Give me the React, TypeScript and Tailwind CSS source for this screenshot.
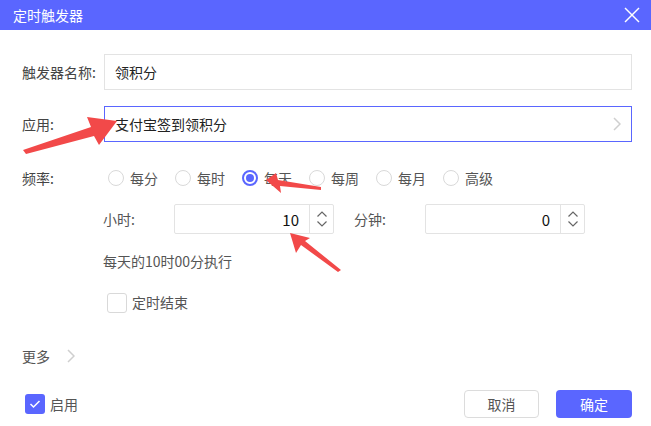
import React from "react";

const font = { fontFamily: '"Noto Sans CJK SC", "Noto Sans", sans-serif' };

function Radio({ label, checked }: { label: string; checked?: boolean }) {
  return (
    <div className="flex items-center w-[67px] shrink-0">
      <span
        className={
          "w-4 h-4 rounded-full border flex items-center justify-center " +
          (checked ? "border-[#5a66ff] border-2" : "border-[#d9d9d9]")
        }
      >
        {checked && <span className="w-2 h-2 rounded-full bg-[#5a66ff]" />}
      </span>
      <span className="ml-[6px] text-[14px] text-[#555] leading-5">{label}</span>
    </div>
  );
}

function Spinner() {
  return (
    <div className="w-[24px] h-full border-l border-[#e3e3e3] flex items-center justify-center">
      <svg width="12" height="20" viewBox="0 0 12 20" fill="none" stroke="#666" strokeWidth="1.2">
        <polyline points="1.5,7.5 6,3 10.5,7.5" />
        <polyline points="1.5,12.5 6,17 10.5,12.5" />
      </svg>
    </div>
  );
}

function NumBox({ value }: { value: string }) {
  return (
    <div className="w-[160px] h-[30px] border border-[#e3e3e3] rounded-[2px] flex items-center">
      <div className="flex-1 text-right pr-[10px] text-[15px] text-[#111] leading-none">{value}</div>
      <Spinner />
    </div>
  );
}

export default function App() {
  return (
    <div className="relative w-[651px] h-[426px] bg-white overflow-hidden" style={font}>
      <div className="h-[30px] bg-[#5a66ff] flex items-center justify-between pl-[13px] pr-[10px]">
        <span className="text-white text-[14px] leading-none">定时触发器</span>
        <svg width="18" height="18" viewBox="0 0 18 18" stroke="white" strokeWidth="1.4">
          <line x1="2" y1="2" x2="16" y2="16" />
          <line x1="16" y1="2" x2="2" y2="16" />
        </svg>
      </div>

      <div className="pl-[22px] pr-[19px]">
        <div className="flex items-center mt-[24px]">
          <span className="w-[82px] text-[14px] text-[#444] shrink-0">触发器名称:</span>
          <div className="flex-1 h-[36px] border border-[#e3e3e3] flex items-center pl-[10px] text-[14px] text-[#222]">
            领积分
          </div>
        </div>

        <div className="flex items-center mt-[16px]">
          <span className="w-[82px] text-[14px] text-[#444] shrink-0">应用:</span>
          <div className="flex-1 h-[36px] border border-[#5a66ff] flex items-center justify-between pl-[10px] pr-[10px] text-[14px] text-[#222]">
            <span>支付宝签到领积分</span>
            <svg width="8" height="14" viewBox="0 0 8 14" fill="none" stroke="#cfcfcf" strokeWidth="1.5">
              <polyline points="1,1 7,7 1,13" />
            </svg>
          </div>
        </div>

        <div className="flex items-center mt-[26px] h-5">
          <span className="w-[86px] text-[14px] text-[#444] shrink-0">频率:</span>
          <Radio label="每分" />
          <Radio label="每时" />
          <Radio label="每天" checked />
          <Radio label="每周" />
          <Radio label="每月" />
          <Radio label="高级" />
        </div>

        <div className="pl-[81px]">
          <div className="flex items-center mt-[16px]">
            <span className="w-[71px] text-[14px] text-[#555] shrink-0">小时:</span>
            <NumBox value="10" />
            <span className="ml-[20px] w-[71px] text-[14px] text-[#555] shrink-0">分钟:</span>
            <NumBox value="0" />
          </div>

          <div className="mt-[17px] text-[14px] text-[#555] leading-5">每天的10时00分执行</div>

          <div className="flex items-center mt-[21px] ml-[4px]">
            <span className="w-[20px] h-[20px] border border-[#d9d9d9] rounded-[3px]" />
            <span className="ml-[5px] text-[14px] text-[#555]">定时结束</span>
          </div>
        </div>

        <div className="flex items-center mt-[33px] h-5">
          <span className="text-[14px] text-[#555]">更多</span>
          <svg className="ml-[17px]" width="8" height="14" viewBox="0 0 8 14" fill="none" stroke="#cfcfcf" strokeWidth="1.5">
            <polyline points="1,1 7,7 1,13" />
          </svg>
        </div>

        <div className="flex items-center justify-between mt-[24px] pl-[3px] pr-[0px]">
          <div className="flex items-center">
            <span className="w-[20px] h-[20px] rounded-[3px] bg-[#5a66ff] flex items-center justify-center">
              <svg width="12" height="10" viewBox="0 0 12 10" fill="none" stroke="white" strokeWidth="1.5">
                <polyline points="1.5,5 4.5,8 10.5,2" />
              </svg>
            </span>
            <span className="ml-[5px] text-[14px] text-[#555]">启用</span>
          </div>
          <div className="flex items-center gap-[17px]">
            <button className="w-[75px] h-[28px] border border-[#dcdcdc] rounded-[4px] text-[14px] text-[#555] bg-white">
              取消
            </button>
            <button className="w-[76px] h-[28px] rounded-[4px] text-[14px] text-white bg-[#5a66ff]">
              确定
            </button>
          </div>
        </div>
      </div>

      <svg className="absolute left-0 top-0 pointer-events-none" width="651" height="426" viewBox="0 0 651 426">
        <polygon fill="#f24949" points="23,150 91,127 87,117 117,121 99,145 94,136 26,154" />
        <polygon fill="#f24949" points="321,190 280,186 281,193 266,180 276,173 278,180 321,187" />
        <polygon fill="#f24949" points="341,270 305,241 310,238 290,233 296,253 301,245 338,272" />
      </svg>
    </div>
  );
}
